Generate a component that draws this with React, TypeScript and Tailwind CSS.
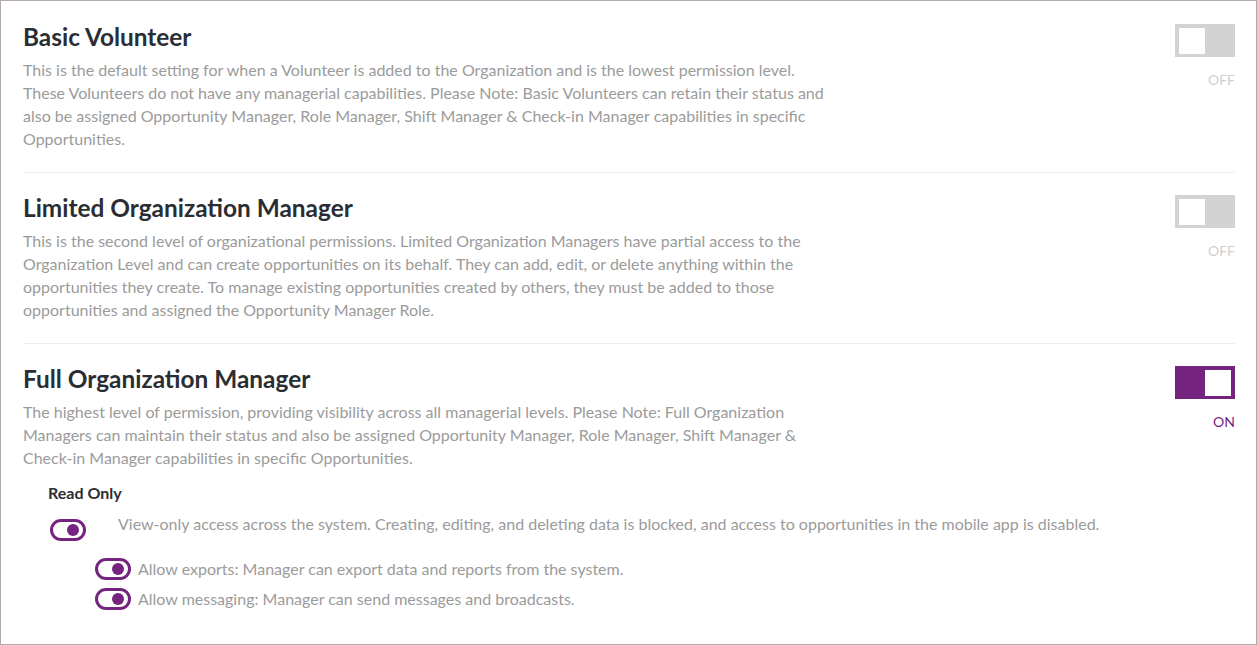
import * as React from "react";

type Level = {
  title: string;
  lines: string[];
  on: boolean;
};

const levels: Level[] = [
  {
    title: "Basic Volunteer",
    lines: [
      "This is the default setting for when a Volunteer is added to the Organization and is the lowest permission level.",
      "These Volunteers do not have any managerial capabilities. Please Note: Basic Volunteers can retain their status and",
      "also be assigned Opportunity Manager, Role Manager, Shift Manager & Check-in Manager capabilities in specific",
      "Opportunities.",
    ],
    on: false,
  },
  {
    title: "Limited Organization Manager",
    lines: [
      "This is the second level of organizational permissions. Limited Organization Managers have partial access to the",
      "Organization Level and can create opportunities on its behalf. They can add, edit, or delete anything within the",
      "opportunities they create. To manage existing opportunities created by others, they must be added to those",
      "opportunities and assigned the Opportunity Manager Role.",
    ],
    on: false,
  },
  {
    title: "Full Organization Manager",
    lines: [
      "The highest level of permission, providing visibility across all managerial levels. Please Note: Full Organization",
      "Managers can maintain their status and also be assigned Opportunity Manager, Role Manager, Shift Manager &",
      "Check-in Manager capabilities in specific Opportunities.",
    ],
    on: true,
  },
];

function SquareToggle({ on }: { on: boolean }) {
  return (
    <div className="flex flex-col items-end">
      <div
        className={
          on
            ? "flex h-[33px] w-[60px] items-center justify-end bg-[#74237f] px-1"
            : "flex h-[33px] w-[60px] items-center justify-start bg-[#d3d3d3] px-1"
        }
      >
        <div className="h-[26px] w-[26px] bg-white" />
      </div>
      <span
        className={
          on
            ? "mt-[13px] text-[14px] leading-[20px] text-[#74237f]"
            : "mt-[13px] text-[14px] leading-[20px] text-[#cfcfcf]"
        }
      >
        {on ? "ON" : "OFF"}
      </span>
    </div>
  );
}

function PillToggle() {
  return (
    <div className="flex h-[22px] w-[36px] shrink-0 items-center justify-end rounded-full border-[3px] border-[#74237f] pr-[4px]">
      <div className="h-[12px] w-[12px] rounded-full bg-[#74237f]" />
    </div>
  );
}

export default function App() {
  return (
    <div
      className="h-[645px] w-[1257px] border border-[#b3a9a9] bg-white pl-[22px] pr-[21px]"
      style={{ fontFamily: "Lato, 'Open Sans', sans-serif" }}
    >
      {levels.map((lvl, i) => (
        <div
          key={lvl.title}
          className={
            i === 0
              ? "flex justify-between border-b border-[#ececec] pt-[22px] pb-[22px]"
              : i < levels.length - 1
                ? "flex justify-between border-b border-[#ececec] pt-[21px] pb-[22px]"
                : "flex justify-between pt-[21px]"
          }
        >
          <div>
            <h2 className="text-[24.4px] font-bold leading-[28px] text-[#2a2e33]">{lvl.title}</h2>
            <div className="mt-[7px] text-[16px] leading-[23px] text-[#9b9b9b]">
              {lvl.lines.map((l) => (
                <div key={l}>{l}</div>
              ))}
            </div>
          </div>
          <div className="pt-[1px]">
            <SquareToggle on={lvl.on} />
          </div>
        </div>
      ))}

      <div className="pl-[25px] pt-[14px]">
        <div className="text-[16px] font-bold leading-[20px] text-[#2a2e33]">Read Only</div>
        <div className="mt-[11px] flex items-start">
          <div className="ml-[2px] pt-[5px]">
            <PillToggle />
          </div>
          <p className="ml-[32px] text-[16px] leading-[20px] text-[#9b9b9b]">
            View-only access across the system. Creating, editing, and deleting data is blocked, and access to opportunities in the mobile app is disabled.
          </p>
        </div>
        <div className="mt-[17px] flex flex-col gap-[8px] pl-[47px]">
          <div className="flex items-center gap-[7px]">
            <PillToggle />
            <span className="text-[16px] leading-[20px] text-[#9b9b9b]">
              Allow exports: Manager can export data and reports from the system.
            </span>
          </div>
          <div className="flex items-center gap-[7px]">
            <PillToggle />
            <span className="text-[16px] leading-[20px] text-[#9b9b9b]">
              Allow messaging: Manager can send messages and broadcasts.
            </span>
          </div>
        </div>
      </div>
    </div>
  );
}
